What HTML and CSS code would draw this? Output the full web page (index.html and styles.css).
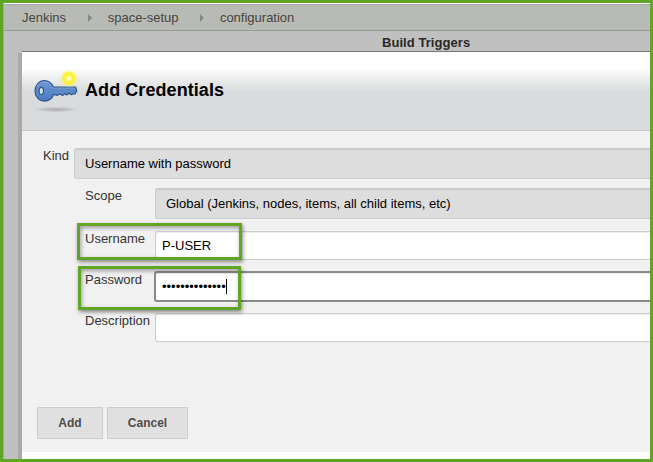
FILE: index.html
```
<!DOCTYPE html>
<html lang="en">
<head>
<meta charset="utf-8">
<title>Add Credentials</title>
<link rel="stylesheet" href="styles.css">
</head>
<body>
<div class="frame">
  <nav class="breadcrumbs">
    <span>Jenkins</span><i class="arrow"></i><span>space-setup</span><i class="arrow"></i><span>configuration</span>
  </nav>
  <div class="section-title">Build Triggers</div>
  <div class="stage">
    <div class="shade"></div>
    <main class="dialog">
      <header class="dialog-head">
        <svg class="key" width="48" height="48" viewBox="0 0 48 48">
          <defs>
            <radialGradient id="shadow"><stop offset="0" stop-color="#777" stop-opacity=".5"/><stop offset="1" stop-color="#777" stop-opacity="0"/></radialGradient>
            <radialGradient id="glow"><stop offset="0" stop-color="#fffff0"/><stop offset=".2" stop-color="#fffbb0"/><stop offset=".42" stop-color="#fff32a"/><stop offset=".68" stop-color="#fdf13c" stop-opacity=".85"/><stop offset="1" stop-color="#fff45a" stop-opacity="0"/></radialGradient>
            <linearGradient id="blue" x2="0" y2="1"><stop offset="0" stop-color="#7099d0"/><stop offset=".5" stop-color="#5b8ac8"/><stop offset="1" stop-color="#4a7abd"/></linearGradient>
          </defs>
          <ellipse cx="24" cy="41.5" rx="23" ry="3" fill="url(#shadow)"/>
          <path fill="url(#blue)" stroke="#2f578f" stroke-width="1.2" stroke-linejoin="round" d="M21.2 18.8C19.5 15 16 12.6 12.500 12.600C7.200 12.600 3 17 3 23C3 29 7.200 33.200 12.500 33.200C16.600 33.200 20.500 30.300 21.500 26.500L25.500 27.300L28 26L30.500 27.500L33 25.800L34.800 27L37 25.200L39.500 26.800L41.500 25.800L43 26L44.700 23L43.600 19.200L21.200 18.800Z"/>
          <path fill="none" stroke="#8fb2de" stroke-width=".9" opacity=".6" d="M4.500 19C6 15.500 8.500 13.900 12 13.900C16 13.900 18.500 16.200 20 20H42.500"/>
          <ellipse cx="9.300" cy="22.900" rx="2.200" ry="3.600" fill="#dce2ea" stroke="#2f578f" stroke-width="1.200"/>
          <circle cx="37" cy="10.500" r="9" fill="url(#glow)"/>
        </svg>
        <h1>Add Credentials</h1>
      </header>
      <form class="dialog-body">
        <div class="row kind"><label>Kind</label><div class="control select">Username with password</div></div>
        <div class="row scope"><label>Scope</label><div class="control select">Global (Jenkins, nodes, items, all child items, etc)</div></div>
        <div class="row user"><label>Username</label><div class="control">P-USER</div></div>
        <div class="row pass"><label>Password</label><div class="control focused">••••••••••••••<i class="caret"></i></div></div>
        <div class="row desc"><label>Description</label><div class="control"></div></div>
        <div class="buttons"><div class="button add">Add</div><div class="button cancel">Cancel</div></div>
      </form>
    </main>
  </div>
  <div class="mark mark-user"></div>
  <div class="mark mark-pass"></div>
</div>
</body>
</html>
```
FILE: styles.css
```
* { box-sizing: border-box; }
body { margin: 0; font: 13px/16px "Liberation Sans", Arial, sans-serif; color: #333; }
.frame {
  position: relative; width: 653px; height: 462px; overflow: hidden;
  display: flex; flex-direction: column;
  border: 3px solid #60a526; background: #c0c0c0; box-shadow: inset 1px 0 #a9a9a9;
}
.breadcrumbs {
  flex: none; height: 28px; margin-left: 1px; padding: 2px 0 0 18px;
  display: flex; align-items: center;
  background: #b8bbb5; color: #444542;
  border-top: 1px solid #fff; border-bottom: 1px solid #979b94;
  box-shadow: inset 0 1px #a5a7a6;
}
.arrow { width: 4px; height: 8px; margin: 0 15.6px 0 22px; background: #858685; clip-path: polygon(0 0, 100% 50%, 0 100%); }
.arrow:nth-of-type(2) { margin-left: 21.4px; margin-right: 16px; }
.section-title { flex: none; height: 20px; padding: 4px 0 0 379px; font-weight: bold; letter-spacing: .06px; color: #292929; }
.stage { flex: 1; display: flex; padding-left: 15px; min-height: 0; }
.shade { width: 4px; margin-top: 2px; background: #a9a9a9; }
.dialog { flex: 1; display: flex; flex-direction: column; background: #fff; border-top: 1px solid #777; }
.dialog-head {
  flex: none; height: 79px; display: flex; align-items: flex-start; padding: 16px 0 0 10px;
  border-bottom: 1px solid #c8c8c8;
  background: linear-gradient(#fff 16px, #eceeed 27px, #dcddde 38px, #dadbdd 39px);
}
.key { flex: none; display: block; }
h1 { margin: 12px 0 0 5px; font-size: 18px; line-height: 20px; letter-spacing: .07px; color: #000; }
.dialog-body { height: 321px; background: #f1f1f1; padding-top: 17px; }
.row { display: flex; }
.row label { flex: none; width: 70px; line-height: 16px; white-space: nowrap; }
.control {
  flex: 1; height: 29px; padding: 0 6px; display: flex; align-items: center;
  border: 1px solid #ccc; border-right: 0; border-radius: 3px 0 0 3px;
  background: #fff; color: #000; box-shadow: inset 0 1px 1px #eee;
}
.select { height: 31px; padding: 0 10px; background: #ddd; box-shadow: inset 0 1px 1px #c8c8c8; }
.kind { padding-left: 21px; height: 40px; }
.kind label { width: 31px; }
.scope { padding-left: 63px; height: 43px; }
.user { padding-left: 63px; height: 40px; }
.pass { padding-left: 63px; height: 42px; }
.pass label { width: 69px; padding-top: 1px; }
.desc { padding-left: 63px; height: 94px; }
.focused { height: 31px; border: 2px solid #8a8a8a; border-right: 0; }
.caret { width: 1px; height: 15px; background: #000; }
.buttons { display: flex; gap: 4px; padding-left: 15px; }
.button {
  height: 32px; display: flex; align-items: center; justify-content: center;
  border: 1px solid #ccc; border-radius: 1px; background: #e0e0e0;
  color: #4d4d4d; font-size: 12px; font-weight: bold;
}
.add { width: 66px; }
.cancel { width: 81px; }
/* Highlight callouts lie over the form */
.mark { position: absolute; border: 3px solid #60a526; box-shadow: 1px 2px 4px rgba(0,0,0,.45), inset 1px 2px 4px rgba(0,0,0,.35); }
.mark-user { left: 74px; top: 220px; width: 165px; height: 37px; }
.mark-pass { left: 75px; top: 263px; width: 163px; height: 44px; }
```
